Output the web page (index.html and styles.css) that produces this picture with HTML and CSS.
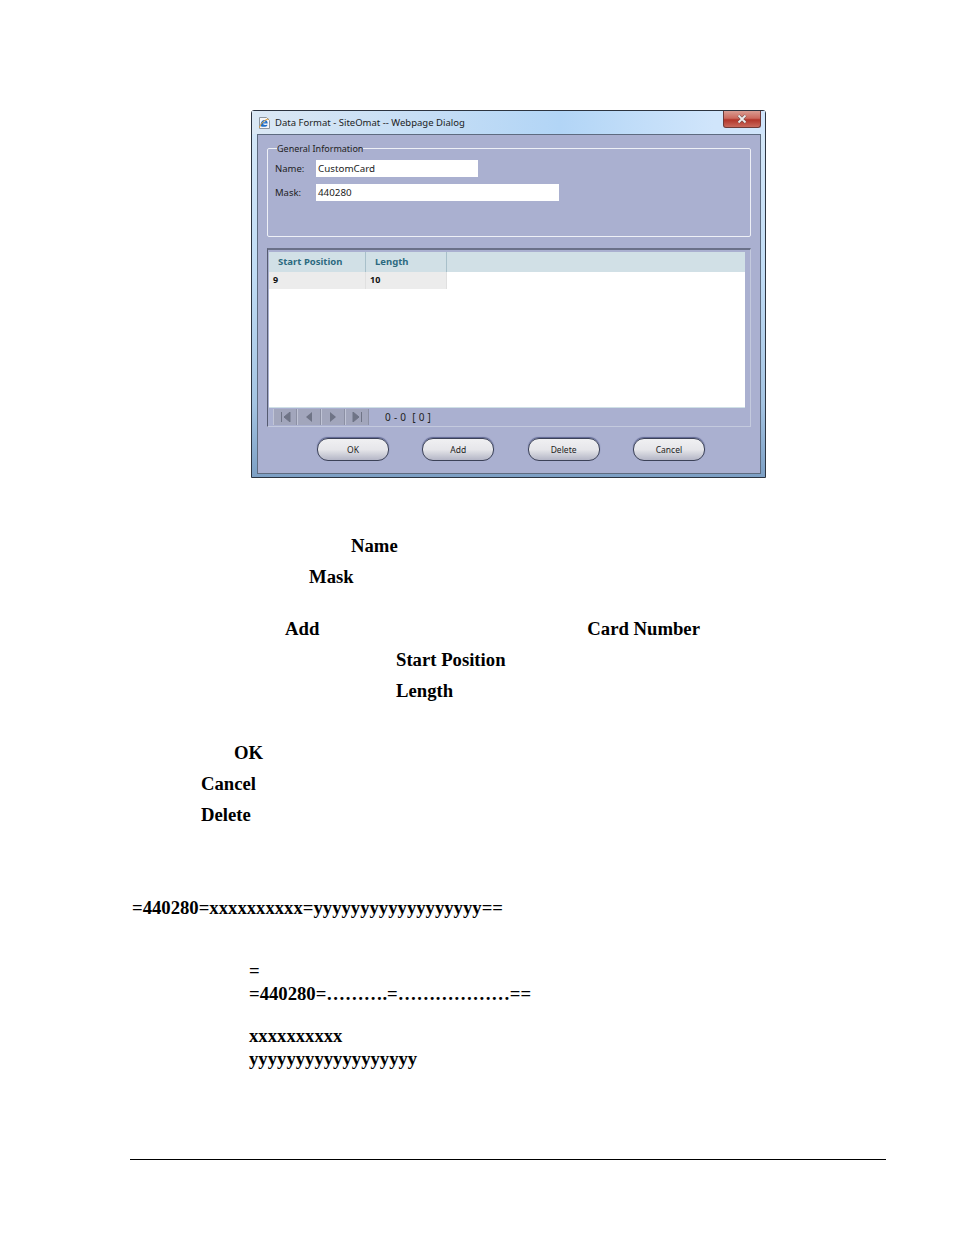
FILE: index.html
```html
<!DOCTYPE html>
<html lang="en">
<head>
    <meta charset="UTF-8">
    <title>Data Format</title>
    <link rel="stylesheet" href="styles.css">
</head>
<body>
    <!-- Dialog screenshot -->
    <div class="dialog">
        <div class="titlebar">
            <svg class="ie-icon" width="13" height="14" viewBox="0 0 13 14">
                <path d="M1.500 1.500h7l3 3v8h-10z" fill="#f6f7f8" stroke="#8d96a0"/>
                <path d="M2.500 9.500c0-3.500 1.700-5.500 4.200-5.500 2 0 3 1.500 3 3.600H5c0 1.500 2.300 1.900 4.200.8v1.500c-2.700 1.400-6.700 1-6.700-.4zM5 6.300h2.500C7.400 5 5.300 5 5 6.300z" fill="#1f6fc8"/>
                <path d="M1.500 11.500C3 7 7 3.500 10.500 3" stroke="#e8a030" stroke-width="1" fill="none"/>
            </svg>
            <span class="title-text">Data Format - SiteOmat -- Webpage Dialog</span>
            <div class="close-btn">
                <svg width="12" height="10" viewBox="0 0 12 10">
                    <path d="M2.500 1.500l7 7M9.500 1.500l-7 7" stroke="#6e4a48" stroke-width="3" fill="none"/>
                    <path d="M2.500 1.500l7 7M9.500 1.500l-7 7" stroke="#eeeeee" stroke-width="1.800" fill="none"/>
                </svg>
            </div>
        </div>
        <div class="panel">
            <fieldset class="general">
                <legend>General Information</legend>
                <div class="field-row">
                    <label>Name:</label>
                    <div class="input input-name">CustomCard</div>
                </div>
                <div class="field-row">
                    <label>Mask:</label>
                    <div class="input input-mask">440280</div>
                </div>
            </fieldset>

            <div class="grid-box">
                <div class="grid">
                    <div class="grid-head">
                        <div class="cell cell-start">Start Position</div>
                        <div class="cell cell-length">Length</div>
                    </div>
                    <div class="grid-row">
                        <div class="cell cell-start">9</div>
                        <div class="cell cell-length">10</div>
                    </div>
                </div>
                <div class="pager">
                    <div class="pager-btns">
                        <div class="pager-btn"><svg width="11" height="10" viewBox="0 0 11 10"><path d="M1.500 0v10M10 0v10L4 5z" stroke="#6f7486" fill="#6f7486" stroke-width="1"/></svg></div>
                        <div class="pager-btn"><svg width="8" height="10" viewBox="0 0 8 10"><path d="M7 0v10L1 5z" fill="#6f7486"/></svg></div>
                        <div class="pager-btn"><svg width="8" height="10" viewBox="0 0 8 10"><path d="M1 0v10l6-5z" fill="#6f7486"/></svg></div>
                        <div class="pager-btn"><svg width="11" height="10" viewBox="0 0 11 10"><path d="M9.500 0v10M1 0v10l6-5z" stroke="#6f7486" fill="#6f7486" stroke-width="1"/></svg></div>
                    </div>
                    <span class="pager-text">0 - 0&nbsp; [ 0 ]</span>
                </div>
            </div>

            <div class="buttons">
                <div class="pill">OK</div>
                <div class="pill">Add</div>
                <div class="pill">Delete</div>
                <div class="pill">Cancel</div>
            </div>
        </div>
    </div>

    <!-- Document text -->
    <div class="doc">
        <div class="line tall indent-name">Name</div>
        <div class="line tall indent-mask">Mask</div>
        <div class="line tall indent-add gap-a add-row"><span>Add</span><span>Card Number</span></div>
        <div class="line tall indent-pos">Start Position</div>
        <div class="line tall indent-pos">Length</div>
        <div class="line tall indent-ok gap-ok">OK</div>
        <div class="line tall indent-cancel">Cancel</div>
        <div class="line tall indent-cancel">Delete</div>
        <div class="line mask-line">=440280=xxxxxxxxxx=yyyyyyyyyyyyyyyyyy==</div>
        <div class="line short indent-eq gap-b">=</div>
        <div class="line short indent-eq">=440280=……….=………………==</div>
        <div class="line short indent-eq gap-c">xxxxxxxxxx</div>
        <div class="line short indent-eq">yyyyyyyyyyyyyyyyyy</div>
    </div>

    <!-- Footer rule -->
    <div class="foot-rule"></div>
</body>
</html>
```

FILE: styles.css
```css
/* General */
* {
    margin: 0;
    padding: 0;
    box-sizing: border-box;
}
body {
    background-color: #fff;
    color: #000;
    font-family: 'Liberation Serif', serif;
    padding-top: 110px;
    height: 1235px;
    overflow: hidden;
}

/* Dialog */
.dialog {
    width: 515px;
    height: 368px;
    margin-left: 251px;
    padding: 0 4px 4px 5px;
    border: 1px solid #2c3440;
    border-radius: 3px 3px 0 0;
    background: linear-gradient(to bottom, #d6e8f8 0%, #c0dcf5 45%, #a4c4e2 80%, #7c9fc4 100%);
    font-family: 'Noto Sans', sans-serif;
}
.titlebar {
    display: flex;
    align-items: center;
    height: 23px;
    margin: 0 -4px 0 -5px;
    padding-left: 6px;
    background: linear-gradient(to right, #dbe8f4 0%, #c4ddf5 35%, #b2d5f6 60%, #d0e5fb 90%);
}
.ie-icon {
    margin-right: 4px;
}
.title-text {
    font-size: 9.500px;
    color: #1c1c1c;
    flex: 1;
}
.close-btn {
    display: flex;
    align-items: center;
    justify-content: center;
    align-self: flex-start;
    width: 38px;
    height: 17px;
    margin-right: 4px;
    background: linear-gradient(to bottom, #d99c92 0%, #cc6a5e 45%, #b2352a 55%, #c9695c 100%);
    border: 1px solid #6e3a38;
    border-top: none;
    border-radius: 0 0 3px 3px;
}

/* Panel */
.panel {
    height: 340px;
    background-color: #aab0d0;
    border: 1px solid #5e6b80;
    padding: 7px 9px 0 9px;
}
.general {
    height: 95px;
    border: 1px solid #eef0f6;
    border-radius: 2px;
    padding: 6px 0 0 7px;
    font-size: 9.500px;
    color: #222;
}
.general legend {
    margin-left: 2px;
    padding-top: 2px;
    font-size: 9px;
    line-height: 10px;
    color: #222;
}
.field-row {
    display: flex;
    align-items: center;
    height: 17px;
    margin-bottom: 7px;
}
.field-row label {
    width: 41px;
}
.input {
    height: 17px;
    line-height: 17px;
    padding-left: 2px;
    background-color: #fff;
    font-size: 9.800px;
    color: #222;
}
.input-name {
    width: 162px;
}
.input-mask {
    width: 243px;
}

/* Grid */
.grid-box {
    height: 179px;
    margin-top: 11px;
    padding: 2px 5px 0 1px;
    border: 1px solid #c4cade;
    border-top: 2px solid #6a7088;
    border-left: 1px solid #555b70;
}
.grid {
    height: 156px;
    background-color: #fff;
    border-bottom: 1px solid #cfe0e6;
}
.grid-head {
    display: flex;
    height: 20px;
    background-color: #d1e0e6;
    font-size: 9.500px;
    font-weight: 700;
    color: #2c6a80;
}
.grid-head .cell {
    line-height: 20px;
    border-right: 1px solid #a8c0ca;
}
.grid-row {
    display: flex;
    height: 17px;
    font-size: 9px;
    font-weight: 700;
    color: #111;
}
.grid-row .cell {
    line-height: 16px;
    background-color: #ececec;
    border-right: 1px solid #e0e0e0;
    padding-left: 4px;
}
.cell-start {
    width: 97px;
    padding-left: 9px;
}
.cell-length {
    width: 81px;
    padding-left: 9px;
}

/* Pager */
.pager {
    display: flex;
    align-items: center;
    height: 18px;
    padding-left: 4px;
}
.pager-btns {
    display: flex;
    height: 16px;
    background-color: #a2a6bc;
    margin-right: 16px;
}
.pager-btn {
    display: flex;
    align-items: center;
    justify-content: center;
    width: 24px;
    height: 16px;
    border-right: 1px solid #8c90a4;
    border-left: 1px solid #c0c4d6;
}
.pager-text {
    font-size: 10px;
    color: #222;
    letter-spacing: 0.300px;
}

/* Buttons */
.buttons {
    display: flex;
    justify-content: flex-start;
    gap: 33.300px;
    margin-top: 11px;
    margin-left: 50px;
}
.pill {
    width: 72px;
    height: 23px;
    line-height: 22px;
    text-align: center;
    font-size: 8.500px;
    color: #222;
    border: 1px solid #3c4258;
    border-radius: 11px;
    background: linear-gradient(to bottom, #f0f0f2 0%, #e6e6ea 50%, #b4b6c6 100%);
    box-shadow: 0 -1px 1px #5c6490;
}

/* Document text */
.doc {
    font-size: 18.700px;
    font-weight: 700;
    margin-top: 52px;
}
.line {
    white-space: nowrap;
}
.tall {
    height: 31px;
    line-height: 31px;
}
.short {
    height: 23px;
    line-height: 23px;
}
.gap-a {
    margin-top: 21px;
}
.gap-ok {
    margin-top: 31px;
}
.gap-b {
    margin-top: 36px;
}
.gap-c {
    margin-top: 19px;
}
.indent-name {
    padding-left: 351px;
}
.indent-mask {
    padding-left: 309px;
}
.indent-add {
    padding-left: 285px;
}
.add-row {
    display: flex;
    gap: 268px;
}
.indent-pos {
    padding-left: 396px;
}
.indent-ok {
    padding-left: 234px;
}
.indent-cancel {
    padding-left: 201px;
}
.indent-eq {
    padding-left: 249px;
}
.mask-line {
    height: 31px;
    line-height: 31px;
    margin-top: 62px;
    padding-left: 132px;
}

/* Footer */
.foot-rule {
    width: 756px;
    height: 1px;
    margin: 89px 0 0 130px;
    background-color: #000;
}
```
